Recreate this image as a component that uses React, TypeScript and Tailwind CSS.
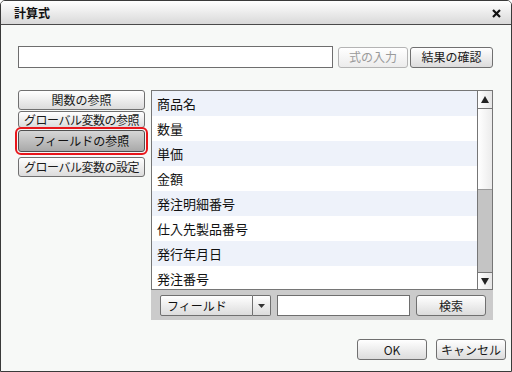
import React from "react";

const jp = { fontFamily: '"Noto Sans CJK JP", "Noto Sans", sans-serif' };

function Btn({ children, className = "", disabled = false }: { children: React.ReactNode; className?: string; disabled?: boolean }) {
  return (
    <div
      className={`flex items-center justify-center rounded-[3px] border bg-gradient-to-b text-[12px] leading-none ${
        disabled
          ? "border-[#b4b4b4] from-[#ffffff] to-[#ececec] text-[#9a9a9a]"
          : "border-[#707070] from-[#ffffff] to-[#dcdcdc] text-[#1a1a1a]"
      } ${className}`}
    >
      {children}
    </div>
  );
}

const rows = ["商品名", "数量", "単価", "金額", "発注明細番号", "仕入先製品番号", "発行年月日", "発注番号"];

export default function App() {
  return (
    <div
      style={jp}
      className="w-[512px] h-[372px] border border-[#3a3a3a] rounded-t-[5px] bg-[#f7f9f7] flex flex-col overflow-hidden"
    >
      <div className="h-[24px] shrink-0 border-b border-[#4a4a4a] bg-gradient-to-b from-[#ffffff] to-[#d9d9d9] flex items-center justify-between pl-[13px] pr-[10px]">
        <span className="text-[12px] font-bold text-[#111]">計算式</span>
        <svg width="9" height="9" viewBox="0 0 9 9" className="mt-[1px]">
          <path d="M1 1 L8 8 M8 1 L1 8" stroke="#111" strokeWidth="2.2" />
        </svg>
      </div>

      <div className="flex flex-col pl-[17px] pr-[17px] pt-[21px]">
        <div className="flex items-center h-[22px]">
          <div className="w-[315px] h-[22px] bg-white border border-[#6e6e6e]" />
          <Btn disabled className="ml-[5px] w-[70px] h-[21px]">式の入力</Btn>
          <Btn className="ml-[2px] w-[83px] h-[21px]">結果の確認</Btn>
        </div>

        <div className="flex mt-[22px]">
          <div className="w-[127px] flex flex-col">
            <Btn className="h-[20px]">関数の参照</Btn>
            <Btn className="h-[17px] mt-[1px] tracking-[-0.5px]">グローバル変数の参照</Btn>
            <div className="mt-[2px] h-[22px] flex items-center justify-center rounded-[3px] border border-[#505050] bg-gradient-to-b from-[#d6d6d6] to-[#a9a9a9] text-[12px] leading-none text-[#111] outline-2 outline-offset-[1px] outline-[#e8161b]">
              フィールドの参照
            </div>
            <Btn className="h-[20px] mt-[5px] tracking-[-0.5px]">グローバル変数の設定</Btn>
          </div>

          <div className="ml-[6px] w-[342px] h-[230px] bg-[#cbcbcb] flex flex-col">
            <div className="h-[200px] border border-[#767676] bg-white flex">
              <div className="flex-1 flex flex-col overflow-hidden">
                {rows.map((r, i) => (
                  <div
                    key={r}
                    className={`h-[25px] shrink-0 flex items-center pl-[5px] text-[13px] text-[#111] ${
                      i % 2 === 0 ? "bg-[#eef2fa]" : "bg-white"
                    }`}
                  >
                    {r}
                  </div>
                ))}
              </div>
              <div className="w-[15px] border-l border-[#767676] flex flex-col bg-[#c4c4c4]">
                <div className="h-[18px] border-b border-[#767676] bg-gradient-to-r from-[#ffffff] to-[#e6e6e6] flex items-center justify-center">
                  <svg width="8" height="7" viewBox="0 0 8 7"><path d="M4 0 L8 7 L0 7 Z" fill="#222" /></svg>
                </div>
                <div className="h-[81px] border-b border-[#9a9a9a] bg-gradient-to-r from-[#ffffff] to-[#ececec]" />
                <div className="flex-1" />
                <div className="h-[17px] border-t border-[#767676] bg-gradient-to-r from-[#ffffff] to-[#e6e6e6] flex items-center justify-center">
                  <svg width="8" height="7" viewBox="0 0 8 7"><path d="M0 0 L8 0 L4 7 Z" fill="#222" /></svg>
                </div>
              </div>
            </div>
            <div className="flex items-center mt-[5px] pl-[9px]">
              <div className="w-[93px] h-[21px] border border-[#707070] rounded-l-[2px] bg-gradient-to-b from-[#ffffff] to-[#dcdcdc] flex items-center pl-[6px] text-[12px] leading-none text-[#111]">
                フィールド
              </div>
              <div className="w-[18px] h-[21px] border border-l-0 border-[#707070] rounded-r-[2px] bg-gradient-to-b from-[#ffffff] to-[#dcdcdc] flex items-center justify-center">
                <svg width="7" height="4" viewBox="0 0 7 4"><path d="M0 0 L7 0 L3.5 4 Z" fill="#333" /></svg>
              </div>
              <div className="ml-[6px] w-[133px] h-[21px] bg-white border border-[#6e6e6e]" />
              <Btn className="ml-[6px] w-[70px] h-[21px]">検索</Btn>
            </div>
          </div>
        </div>

        <div className="flex justify-end mt-[19px] -mr-[12px]">
          <Btn className="w-[70px] h-[21px]">OK</Btn>
          <Btn className="ml-[9px] w-[70px] h-[21px]">キャンセル</Btn>
        </div>
      </div>
    </div>
  );
}
